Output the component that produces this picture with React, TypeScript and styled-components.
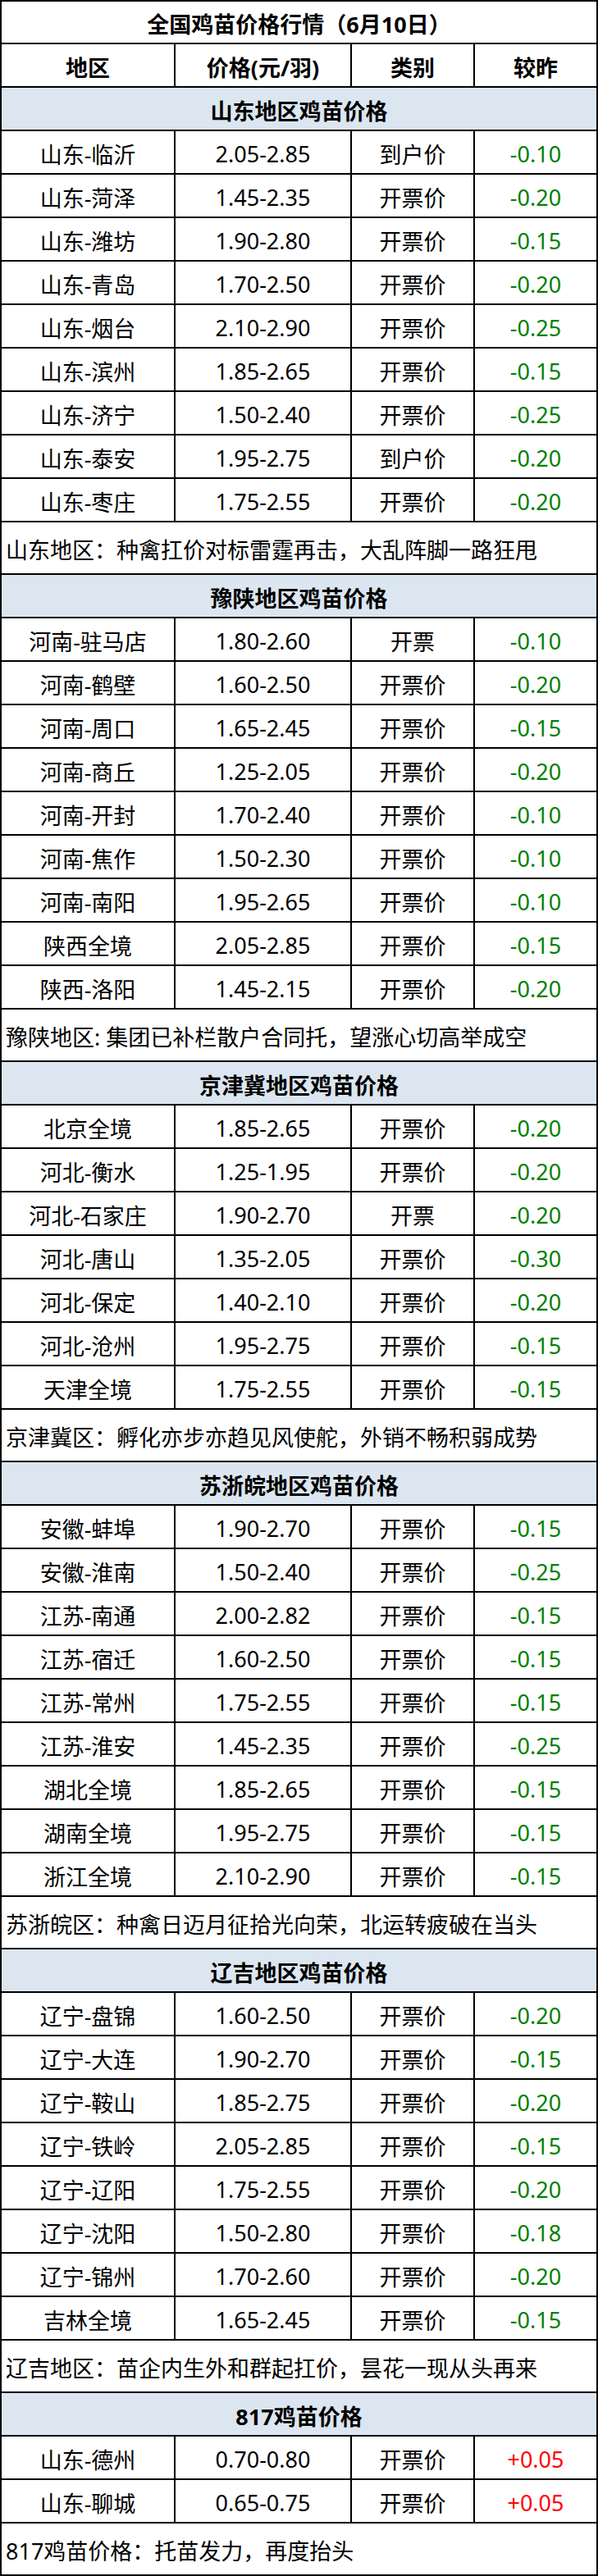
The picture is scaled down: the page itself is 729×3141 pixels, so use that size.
import { Fragment } from 'react';
import styled, { createGlobalStyle } from 'styled-components';

type Row = [string, string, string, string];

interface Section {
  title: string;
  rows: Row[];
  note: string;
}

const sections: Section[] = [
  {
    title: '山东地区鸡苗价格',
    rows: [
      ['山东-临沂', '2.05-2.85', '到户价', '-0.10'],
      ['山东-菏泽', '1.45-2.35', '开票价', '-0.20'],
      ['山东-潍坊', '1.90-2.80', '开票价', '-0.15'],
      ['山东-青岛', '1.70-2.50', '开票价', '-0.20'],
      ['山东-烟台', '2.10-2.90', '开票价', '-0.25'],
      ['山东-滨州', '1.85-2.65', '开票价', '-0.15'],
      ['山东-济宁', '1.50-2.40', '开票价', '-0.25'],
      ['山东-泰安', '1.95-2.75', '到户价', '-0.20'],
      ['山东-枣庄', '1.75-2.55', '开票价', '-0.20'],
    ],
    note: '山东地区：种禽扛价对标雷霆再击，大乱阵脚一路狂甩',
  },
  {
    title: '豫陕地区鸡苗价格',
    rows: [
      ['河南-驻马店', '1.80-2.60', '开票', '-0.10'],
      ['河南-鹤壁', '1.60-2.50', '开票价', '-0.20'],
      ['河南-周口', '1.65-2.45', '开票价', '-0.15'],
      ['河南-商丘', '1.25-2.05', '开票价', '-0.20'],
      ['河南-开封', '1.70-2.40', '开票价', '-0.10'],
      ['河南-焦作', '1.50-2.30', '开票价', '-0.10'],
      ['河南-南阳', '1.95-2.65', '开票价', '-0.10'],
      ['陕西全境', '2.05-2.85', '开票价', '-0.15'],
      ['陕西-洛阳', '1.45-2.15', '开票价', '-0.20'],
    ],
    note: '豫陕地区: 集团已补栏散户合同托，望涨心切高举成空',
  },
  {
    title: '京津冀地区鸡苗价格',
    rows: [
      ['北京全境', '1.85-2.65', '开票价', '-0.20'],
      ['河北-衡水', '1.25-1.95', '开票价', '-0.20'],
      ['河北-石家庄', '1.90-2.70', '开票', '-0.20'],
      ['河北-唐山', '1.35-2.05', '开票价', '-0.30'],
      ['河北-保定', '1.40-2.10', '开票价', '-0.20'],
      ['河北-沧州', '1.95-2.75', '开票价', '-0.15'],
      ['天津全境', '1.75-2.55', '开票价', '-0.15'],
    ],
    note: '京津冀区：孵化亦步亦趋见风使舵，外销不畅积弱成势',
  },
  {
    title: '苏浙皖地区鸡苗价格',
    rows: [
      ['安徽-蚌埠', '1.90-2.70', '开票价', '-0.15'],
      ['安徽-淮南', '1.50-2.40', '开票价', '-0.25'],
      ['江苏-南通', '2.00-2.82', '开票价', '-0.15'],
      ['江苏-宿迁', '1.60-2.50', '开票价', '-0.15'],
      ['江苏-常州', '1.75-2.55', '开票价', '-0.15'],
      ['江苏-淮安', '1.45-2.35', '开票价', '-0.25'],
      ['湖北全境', '1.85-2.65', '开票价', '-0.15'],
      ['湖南全境', '1.95-2.75', '开票价', '-0.15'],
      ['浙江全境', '2.10-2.90', '开票价', '-0.15'],
    ],
    note: '苏浙皖区：种禽日迈月征拾光向荣，北运转疲破在当头',
  },
  {
    title: '辽吉地区鸡苗价格',
    rows: [
      ['辽宁-盘锦', '1.60-2.50', '开票价', '-0.20'],
      ['辽宁-大连', '1.90-2.70', '开票价', '-0.15'],
      ['辽宁-鞍山', '1.85-2.75', '开票价', '-0.20'],
      ['辽宁-铁岭', '2.05-2.85', '开票价', '-0.15'],
      ['辽宁-辽阳', '1.75-2.55', '开票价', '-0.20'],
      ['辽宁-沈阳', '1.50-2.80', '开票价', '-0.18'],
      ['辽宁-锦州', '1.70-2.60', '开票价', '-0.20'],
      ['吉林全境', '1.65-2.45', '开票价', '-0.15'],
    ],
    note: '辽吉地区：苗企内生外和群起扛价，昙花一现从头再来',
  },
  {
    title: '817鸡苗价格',
    rows: [
      ['山东-德州', '0.70-0.80', '开票价', '+0.05'],
      ['山东-聊城', '0.65-0.75', '开票价', '+0.05'],
    ],
    note: '817鸡苗价格：托苗发力，再度抬头',
  },
];

const GlobalStyle = createGlobalStyle`
  body {
    margin: 0;
    background: #ffffff;
    font-family: "Noto Sans", "Noto Sans CJK SC", sans-serif;
  }
`;

// the sheet background shows through the 2px gaps as cell borders
const Sheet = styled.div`
  width: 729px;
  box-sizing: border-box;
  display: grid;
  grid-template-columns: 210px 213px 148px 148px;
  gap: 2px;
  padding: 2px;
  background: #000000;
`;

const Cell = styled.div<{ $tone?: 'down' | 'up' }>`
  height: 51px;
  display: flex;
  align-items: center;
  justify-content: center;
  padding-top: 3px;
  box-sizing: border-box;
  background: #ffffff;
  font-size: 27px;
  color: ${(p) => (p.$tone === 'down' ? '#008000' : p.$tone === 'up' ? '#ff0000' : '#000000')};
  white-space: nowrap;
`;

const HeadCell = styled(Cell)`
  font-weight: 700;
`;

const Title = styled(HeadCell)`
  grid-column: 1 / -1;
  height: 50px;
`;

const SectionTitle = styled(HeadCell)`
  grid-column: 1 / -1;
  background: #dce6f1;
`;

const Note = styled(Cell)`
  grid-column: 1 / -1;
  height: 62px;
  justify-content: flex-start;
  padding-left: 5px;
`;

function App() {
  return (
    <>
      <GlobalStyle />
      <Sheet>
        <Title>全国鸡苗价格行情（6月10日）</Title>
        <HeadCell>地区</HeadCell>
        <HeadCell>价格(元/羽)</HeadCell>
        <HeadCell>类别</HeadCell>
        <HeadCell>较昨</HeadCell>
        {sections.map((s) => (
          <Fragment key={s.title}>
            <SectionTitle>{s.title}</SectionTitle>
            {s.rows.map(([region, price, kind, change]) => (
              <Fragment key={region}>
                <Cell>{region}</Cell>
                <Cell>{price}</Cell>
                <Cell>{kind}</Cell>
                <Cell $tone={change.startsWith('+') ? 'up' : 'down'}>{change}</Cell>
              </Fragment>
            ))}
            <Note>{s.note}</Note>
          </Fragment>
        ))}
      </Sheet>
    </>
  );
}

export default App;
